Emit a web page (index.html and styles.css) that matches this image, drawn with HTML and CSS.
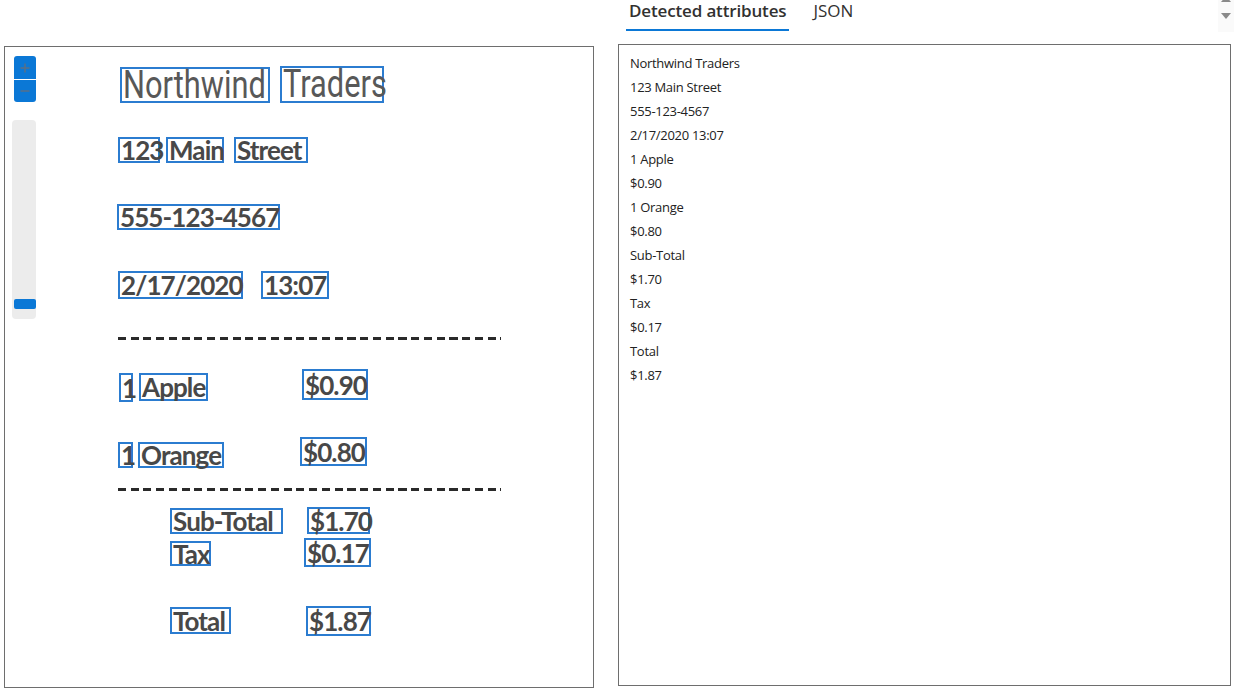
FILE: index.html
```html
<!DOCTYPE html>
<html lang="en">
<head>
<meta charset="utf-8">
<title>Receipt analysis</title>
<link rel="stylesheet" href="styles.css">
</head>
<body>
<div class="layout">
  <section class="viewer">
    <div class="canvas">
      <div class="word title" style="left:115px;top:20px;width:150px;height:36px"><span>Northwind</span></div>
      <div class="word title" style="left:275px;top:19px;width:104px;height:37px"><span>Traders</span></div>
      <div class="word" style="left:113px;top:90px;width:42px;height:26px"><span>123</span></div>
      <div class="word" style="left:161px;top:90px;width:58px;height:26px"><span>Main</span></div>
      <div class="word" style="left:229px;top:90px;width:74px;height:26px"><span>Street</span></div>
      <div class="word" style="left:112px;top:157px;width:163px;height:26px"><span>555-123-4567</span></div>
      <div class="word" style="left:113px;top:224px;width:125px;height:28px"><span>2/17/2020</span></div>
      <div class="word" style="left:256px;top:224px;width:68px;height:28px"><span>13:07</span></div>
      <div class="dashes" style="top:290px"></div>
      <div class="word" style="left:114px;top:326px;width:14px;height:29px"><span>1</span></div>
      <div class="word" style="left:134px;top:326px;width:69px;height:28px"><span>Apple</span></div>
      <div class="word" style="left:297px;top:322px;width:66px;height:31px"><span>$0.90</span></div>
      <div class="word" style="left:113px;top:395px;width:15px;height:26px"><span>1</span></div>
      <div class="word" style="left:133px;top:395px;width:86px;height:26px"><span>Orange</span></div>
      <div class="word" style="left:295px;top:390px;width:67px;height:29px"><span>$0.80</span></div>
      <div class="dashes" style="top:441px"></div>
      <div class="word" style="left:165px;top:461px;width:113px;height:26px"><span>Sub-Total</span></div>
      <div class="word" style="left:302px;top:460px;width:63px;height:27px"><span>$1.70</span></div>
      <div class="word" style="left:165px;top:494px;width:41px;height:25px"><span>Tax</span></div>
      <div class="word" style="left:299px;top:491px;width:67px;height:29px"><span>$0.17</span></div>
      <div class="word" style="left:165px;top:560px;width:61px;height:27px"><span>Total</span></div>
      <div class="word" style="left:301px;top:559px;width:65px;height:30px"><span>$1.87</span></div>
    </div>
    <div class="zoom-controls">
      <div class="zoom-buttons">
        <button class="zbtn" aria-label="Zoom in">
          <svg width="10" height="10" viewBox="0 0 10 10"><path d="M5 0.5V9.5M0.5 5H9.5" stroke="#5d6f83" stroke-width="1.4" fill="none"/></svg>
        </button>
        <button class="zbtn" aria-label="Zoom out">
          <svg width="10" height="10" viewBox="0 0 10 10"><path d="M0.5 5H9.5" stroke="#5d6f83" stroke-width="1.4" fill="none"/></svg>
        </button>
      </div>
      <div class="slider">
        <div class="thumb"></div>
      </div>
    </div>
  </section>

  <section class="results">
    <div class="tabbar">
      <div class="tabs">
        <div class="tab active">Detected attributes</div>
        <div class="tab">JSON</div>
      </div>
      <div class="scroller">
        <svg width="10" height="6" viewBox="0 0 10 6" class="arr up"><path d="M0 6L5 0L10 6Z" fill="#8a8a8a"/></svg>
        <svg width="10" height="6" viewBox="0 0 10 6" class="arr"><path d="M0 0L10 0L5 6Z" fill="#8a8a8a"/></svg>
      </div>
    </div>
    <div class="attr-panel">
      <ul class="attrs">
        <li>Northwind Traders</li>
        <li>123 Main Street</li>
        <li>555-123-4567</li>
        <li>2/17/2020 13:07</li>
        <li>1 Apple</li>
        <li>$0.90</li>
        <li>1 Orange</li>
        <li>$0.80</li>
        <li>Sub-Total</li>
        <li>$1.70</li>
        <li>Tax</li>
        <li>$0.17</li>
        <li>Total</li>
        <li>$1.87</li>
      </ul>
    </div>
  </section>
</div>
</body>
</html>
```

FILE: styles.css
```css
* { box-sizing: border-box; }

html, body {
  margin: 0;
  padding: 0;
  background: #ffffff;
}

body {
  font-family: "Open Sans", "Noto Sans", sans-serif;
  color: #323130;
  width: 1234px;
  height: 689px;
  overflow: hidden;
}

.layout {
  display: grid;
  grid-template-columns: 590px 613px;
  column-gap: 24px;
  padding-left: 4px;
}

/* ---------- left viewer ---------- */
.viewer {
  position: relative;
  margin-top: 46px;
  height: 642px;
  border: 1px solid #6e6e6e;
  overflow: hidden;
}

.canvas {
  position: relative;
  width: 100%;
  height: 100%;
}

.word {
  position: absolute;
  display: flex;
  align-items: center;
  border: 2px solid #2b7cd0;
  padding-left: 1px;
  white-space: nowrap;
  font-family: "Lato", "Liberation Sans", sans-serif;
  font-weight: 700;
  font-size: 26px;
  letter-spacing: -0.9px;
  color: #484848;
}

.word span {
  line-height: 26px;
}

.word.title {
  align-items: flex-start;
  padding-left: 1px;
  font-family: "Roboto", "Liberation Sans", sans-serif;
  font-weight: 400;
  font-size: 39px;
  letter-spacing: 0;
  color: #585858;
}

.word.title span {
  display: block;
  line-height: 32px;
  transform: scaleX(0.79);
  transform-origin: left top;
}

.dashes {
  position: absolute;
  left: 113px;
  width: 383px;
  height: 3px;
  background: repeating-linear-gradient(90deg, #2a2a2a 0 8px, transparent 8px 12.75px);
}

.zoom-controls {
  position: absolute;
  left: 7px;
  top: 9px;
  display: flex;
  flex-direction: column;
  gap: 18px;
}

.zoom-buttons {
  display: flex;
  flex-direction: column;
  gap: 1px;
  padding-left: 2px;
}

.zbtn {
  width: 22px;
  height: 22px;
  border: none;
  padding: 0;
  margin: 0;
  background: #0b78d6;
  display: flex;
  align-items: center;
  justify-content: center;
}

.zbtn:first-child { border-radius: 3px 3px 0 0; height: 23px; }
.zbtn:last-child { border-radius: 0 0 3px 3px; }

.slider {
  position: relative;
  width: 24px;
  height: 199px;
  background: #ececec;
  border-radius: 4px;
}

.thumb {
  position: absolute;
  left: 2px;
  right: 0;
  top: 179px;
  height: 10px;
  background: #0b78d6;
  border-radius: 2px;
}

/* ---------- right results ---------- */
.results {
  display: flex;
  flex-direction: column;
}

.tabbar {
  height: 44px;
  display: flex;
  justify-content: space-between;
  align-items: flex-start;
}

.tabs {
  display: flex;
  gap: 21px;
  padding-left: 8px;
}

.tab {
  font-size: 17px;
  line-height: 22px;
  padding: 0 3px 7px;
  color: #323130;
  border-bottom: 2px solid transparent;
}

.tab.active {
  font-weight: 600;
  letter-spacing: -0.15px;
  border-bottom-color: #0b78d6;
}

.scroller {
  width: 16px;
  height: 32px;
  margin-right: -3px;
  background: #fafafa;
  display: flex;
  flex-direction: column;
  align-items: center;
  gap: 11px;
}

.arr.up { margin-top: -4px; }

.attr-panel {
  height: 642px;
  border: 1px solid #6e6e6e;
  padding: 6px 11px;
}

.attrs {
  list-style: none;
  margin: 0;
  padding: 0;
  font-family: "Open Sans", "Noto Sans", sans-serif;
  font-size: 13px;
  letter-spacing: -0.3px;
  line-height: 24px;
  color: #222;
}
```
